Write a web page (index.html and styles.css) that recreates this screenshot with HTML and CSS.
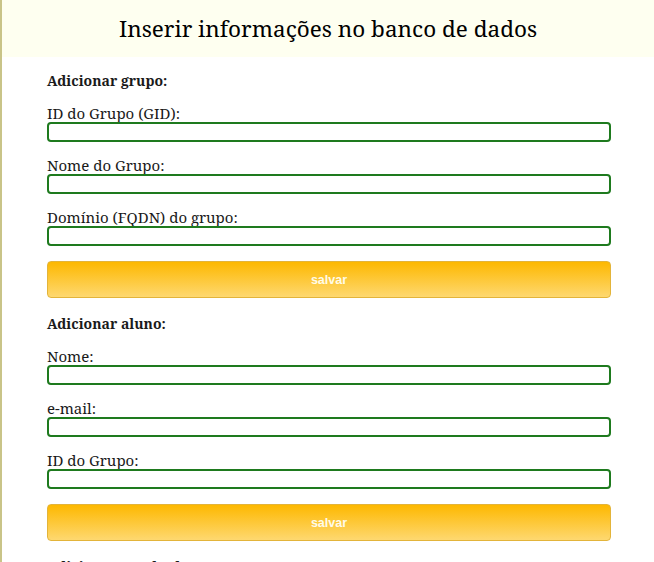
FILE: index.html
```html
<!DOCTYPE html>
<html lang="pt">
<head>
<meta charset="utf-8">
<title>Inserir informações no banco de dados</title>
<link rel="stylesheet" href="styles.css">
</head>
<body>
<div class="page">
  <header class="header">
    <h1 class="title">Inserir informações no banco de dados</h1>
  </header>
  <main class="content">
    <form class="form">
      <h2 class="section-title">Adicionar grupo:</h2>
      <label class="field"><span class="label">ID do Grupo (GID):</span><input class="input" type="text"></label>
      <label class="field"><span class="label">Nome do Grupo:</span><input class="input" type="text"></label>
      <label class="field"><span class="label">Domínio (FQDN) do grupo:</span><input class="input" type="text"></label>
      <button class="btn" type="button">salvar</button>
    </form>
    <form class="form">
      <h2 class="section-title">Adicionar aluno:</h2>
      <label class="field"><span class="label">Nome:</span><input class="input" type="text"></label>
      <label class="field"><span class="label">e-mail:</span><input class="input" type="text"></label>
      <label class="field"><span class="label">ID do Grupo:</span><input class="input" type="text"></label>
      <button class="btn" type="button">salvar</button>
    </form>
    <form class="form">
      <h2 class="section-title">Adicionar resultado:</h2>
    </form>
  </main>
</div>
</body>
</html>
```
FILE: styles.css
```css
html, body {
  margin: 0;
  padding: 0;
  background: #ffffff;
}
body {
  font-family: "Noto Serif", "DejaVu Serif", serif;
  color: #222;
}
.page {
  border-left: 2px solid #c9c488;
  min-height: 562px;
}
.header {
  background: #fefff0;
  height: 57px;
  display: flex;
  align-items: center;
  justify-content: center;
}
.title {
  margin: 0;
  font-size: 22.5px;
  font-weight: normal;
  color: #000;
}
.content {
  padding: 14px 43px 0 45px;
}
.form {
  display: flex;
  flex-direction: column;
}
.section-title {
  margin: 0 0 13px;
  font-size: 14px;
  font-weight: bold;
  color: #1a1a1a;
  line-height: 20px;
}
.field {
  display: flex;
  flex-direction: column;
  margin-bottom: 14px;
}
.label {
  font-size: 15px;
  line-height: 18px;
  color: #1a1a1a;
}
.input {
  box-sizing: border-box;
  height: 20px;
  border: 2px solid #1e7a1e;
  border-radius: 4px;
  padding: 0 4px;
  margin: 0;
  background: #fff;
}
.btn {
  height: 37px;
  border: 1px solid #e3b43a;
  border-radius: 4px;
  background: linear-gradient(#fdb800, #fed870);
  color: #fffbe8;
  font-family: "Liberation Sans", Arial, sans-serif;
  font-weight: bold;
  font-size: 12.5px;
  margin: 1px 0 16px;
  cursor: pointer;
}
```
